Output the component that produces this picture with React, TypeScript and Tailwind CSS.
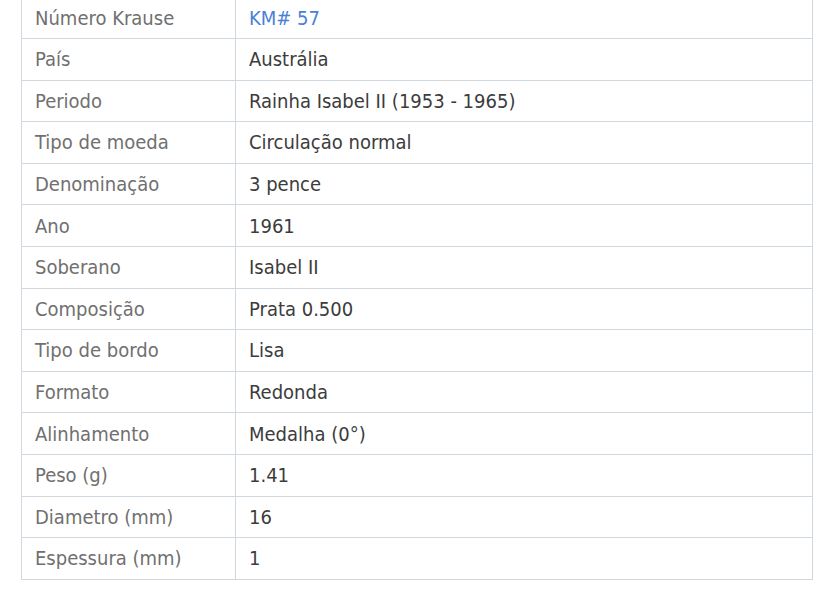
import React from "react";

const rows: [string, string, boolean?][] = [
  ["Número Krause", "KM# 57", true],
  ["País", "Austrália"],
  ["Periodo", "Rainha Isabel II (1953 - 1965)"],
  ["Tipo de moeda", "Circulação normal"],
  ["Denominação", "3 pence"],
  ["Ano", "1961"],
  ["Soberano", "Isabel II"],
  ["Composição", "Prata 0.500"],
  ["Tipo de bordo", "Lisa"],
  ["Formato", "Redonda"],
  ["Alinhamento", "Medalha (0°)"],
  ["Peso (g)", "1.41"],
  ["Diametro (mm)", "16"],
  ["Espessura (mm)", "1"],
];

export default function App() {
  return (
    <div className="w-[828px] h-[594px] bg-white overflow-hidden">
      <div className="pl-[21px] pr-[15px] -mt-[3.6px]">
        <table
          className="w-[792px] border-collapse text-[20px]"
          style={{ fontFamily: '"DejaVu Sans Condensed", "DejaVu Sans", sans-serif' }}
        >
          <tbody>
            {rows.map(([k, v, link]) => (
              <tr key={k} className="h-[41.6px]">
                <td className="w-[214px] border-[1.5px] border-[#d2d8e0] pl-[13px] text-[#707070] align-middle">
                  {k}
                </td>
                <td
                  className={
                    "border-[1.5px] border-[#d2d8e0] pl-[13px] align-middle " +
                    (link ? "text-[#4a7fd6]" : "text-[#3c3c3c]")
                  }
                >
                  {v}
                </td>
              </tr>
            ))}
          </tbody>
        </table>
      </div>
    </div>
  );
}
